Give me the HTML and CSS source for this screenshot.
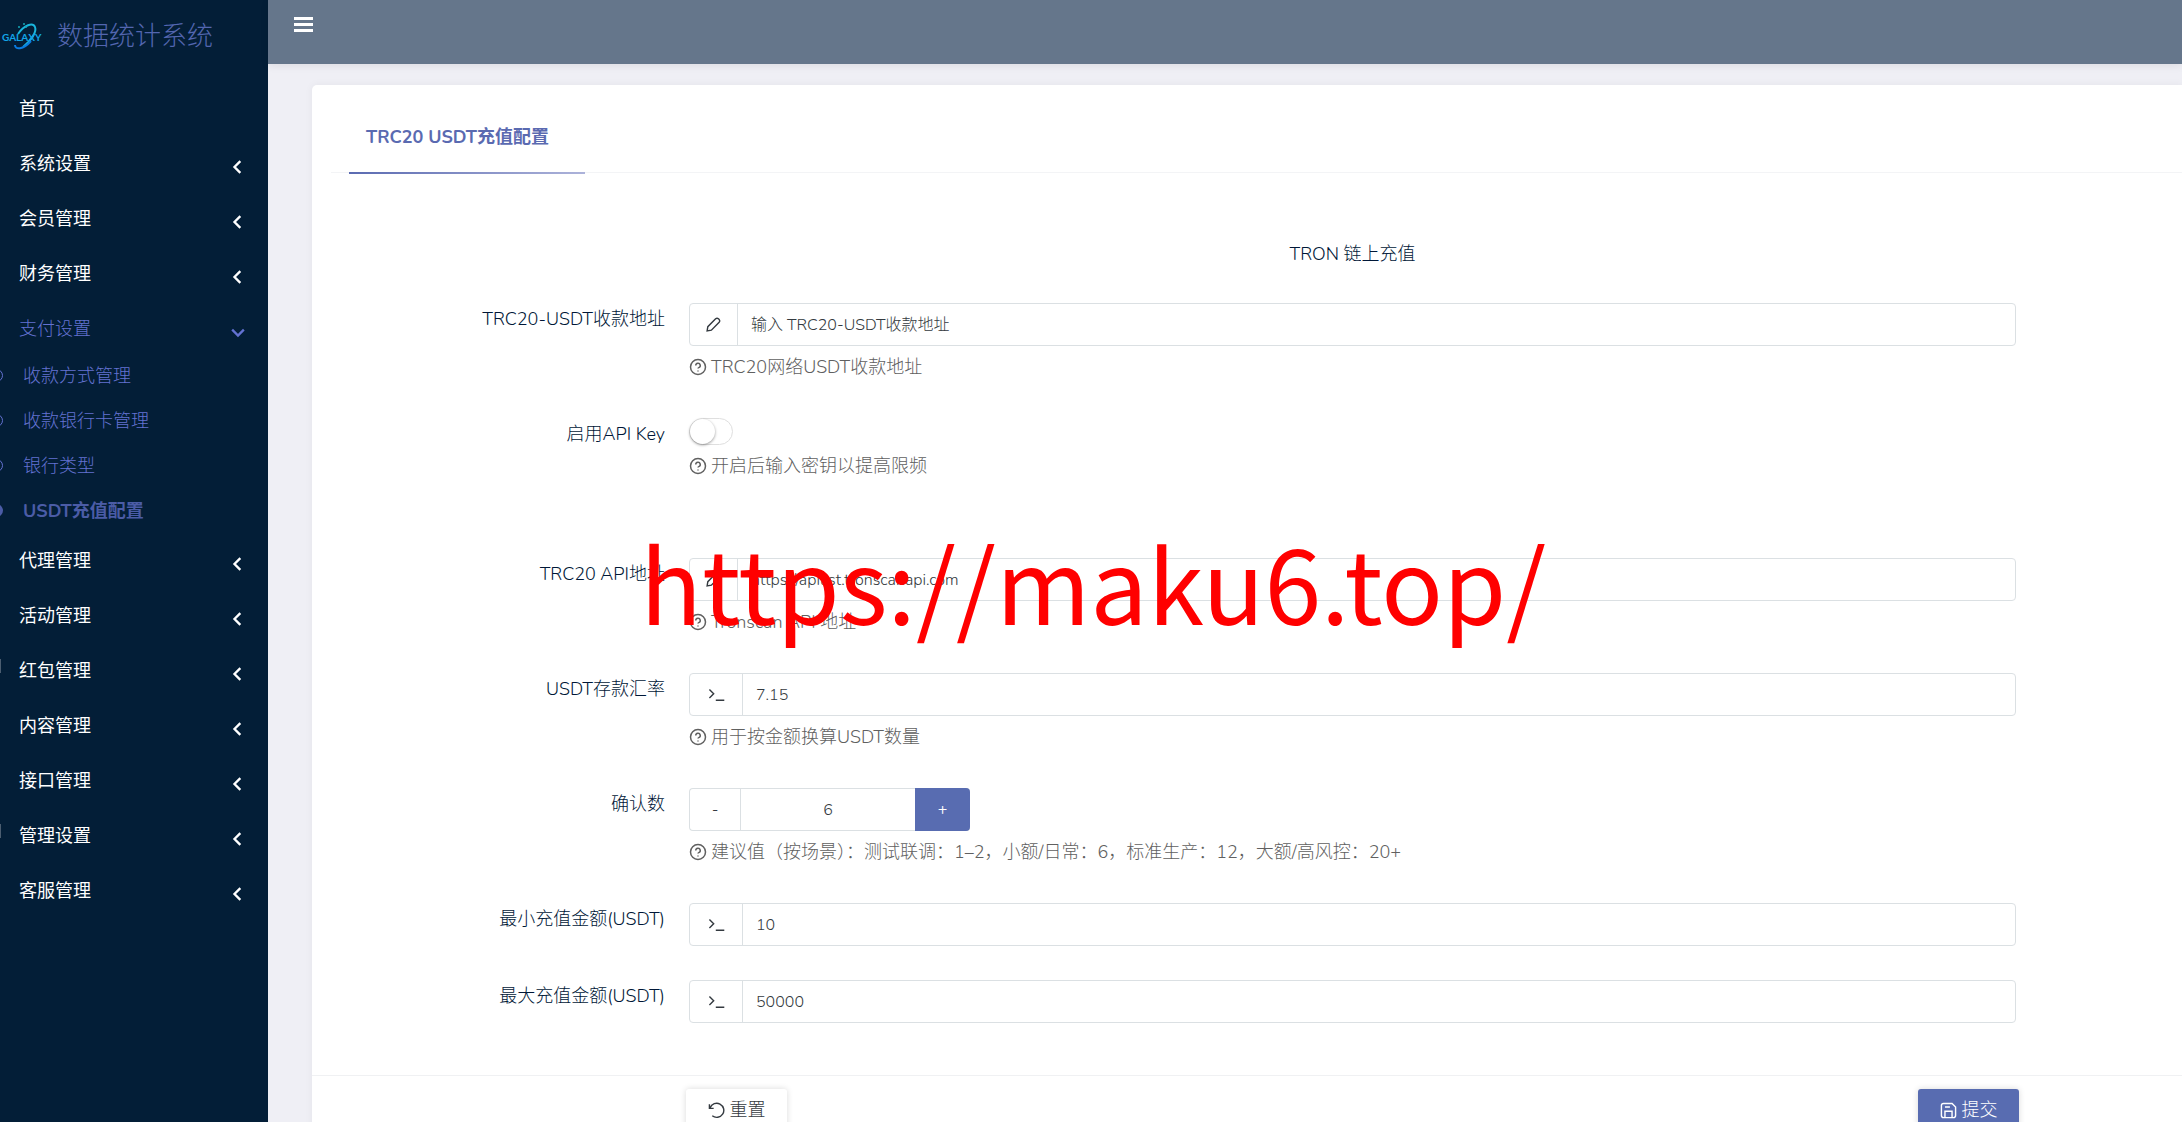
FILE: index.html
```html
<!DOCTYPE html>
<html lang="zh-CN">

<head>
    <meta charset="UTF-8">
    <meta name="viewport" content="width=device-width, initial-scale=1.0">
    <title>数据统计系统</title>
    <link rel="stylesheet" href="styles.css">
</head>

<body>
    <svg class="sprite" aria-hidden="true">
        <symbol id="i-left" viewBox="0 0 12 12"><path d="M8 1L3 6l5 5" /></symbol>
        <symbol id="i-down" viewBox="0 0 12 12"><path d="M1 4l5 5 5-5" /></symbol>
        <symbol id="i-help" viewBox="0 0 24 24"><circle cx="12" cy="12" r="10" /><path d="M9 10a3 3 0 1 1 4 2.800c-.7.300-1 .7-1 1.200M12 16.500v1.500" /></symbol>
        <symbol id="i-edit" viewBox="0 0 24 24"><path d="M3 21l1-6L15 4a3 3 0 0 1 4 0l1 1a3 3 0 0 1 0 4L9 20z" /></symbol>
        <symbol id="i-term" viewBox="0 0 24 24"><path d="M2 5l6 6-6 6M11 20h12" /></symbol>
        <symbol id="i-reset" viewBox="0 0 24 24"><path d="M2 3v6h6M3 8a10 10 0 1 1 3 11.500" /></symbol>
        <symbol id="i-save" viewBox="0 0 24 24"><path d="M5 2h12l5 5v12a3 3 0 0 1-3 3H5a3 3 0 0 1-3-3V5a3 3 0 0 1 3-3zM7 22v-9h10v9M7 7h7" /></symbol>
    </svg>

    <div class="layout">
        <aside class="sidebar">
            <a class="brand" href="#">
                <svg class="logo" viewBox="0 0 42 32" role="img" aria-label="GALAXY">
                    <path class="ring" d="M17 13C23 4 32 1 34 6c2 5-4 14-12 20" />
                    <path class="ring low" d="M14 24c0 5 8 5 16-4" />
                    <circle class="star" cx="23" cy="3" r="1" />
                    <circle class="star" cx="18" cy="6" r="1" />
                    <circle class="star" cx="25" cy="6" r="1" />
                    <text x="1" y="20">GALAXY</text>
                </svg>
                <span>数据统计系统</span>
            </a>
            <nav class="menu">
                <a href="#">首页</a>
                <a href="#">系统设置<svg><use href="#i-left" /></svg></a>
                <a href="#">会员管理<svg><use href="#i-left" /></svg></a>
                <a href="#">财务管理<svg><use href="#i-left" /></svg></a>
                <a class="open" href="#">支付设置<svg><use href="#i-down" /></svg></a>
                <div class="submenu">
                    <a href="#">收款方式管理</a>
                    <a href="#">收款银行卡管理</a>
                    <a href="#">银行类型</a>
                    <a class="active" href="#">USDT充值配置</a>
                </div>
                <a href="#">代理管理<svg><use href="#i-left" /></svg></a>
                <a href="#">活动管理<svg><use href="#i-left" /></svg></a>
                <a class="cut" href="#">红包管理<svg><use href="#i-left" /></svg></a>
                <a href="#">内容管理<svg><use href="#i-left" /></svg></a>
                <a href="#">接口管理<svg><use href="#i-left" /></svg></a>
                <a class="cut" href="#">管理设置<svg><use href="#i-left" /></svg></a>
                <a href="#">客服管理<svg><use href="#i-left" /></svg></a>
            </nav>
        </aside>

        <div class="page">
            <header class="topbar">
                <button class="toggle-menu" type="button" aria-label="菜单"><span></span><span></span><span></span></button>
            </header>

            <form class="card">
                <div class="tabs"><a class="tab" href="#">TRC20 USDT充值配置</a></div>

                <h4 class="title">TRON 链上充值</h4>

                <div class="row">
                    <label for="address">TRC20-USDT收款地址</label>
                    <div class="field">
                        <div class="group">
                            <span class="addon"><svg><use href="#i-edit" /></svg></span>
                            <input id="address" type="text" placeholder="输入 TRC20-USDT收款地址">
                        </div>
                        <p class="help"><svg><use href="#i-help" /></svg>TRC20网络USDT收款地址</p>
                    </div>
                </div>

                <div class="row switch-row">
                    <label for="apikey">启用API Key</label>
                    <div class="field">
                        <input class="switch" id="apikey" type="checkbox">
                        <p class="help"><svg><use href="#i-help" /></svg>开启后输入密钥以提高限频</p>
                    </div>
                </div>

                <div class="row">
                    <label for="api">TRC20 API地址</label>
                    <div class="field">
                        <div class="group">
                            <span class="addon"><svg><use href="#i-edit" /></svg></span>
                            <input id="api" type="text" value="https://apilist.tronscanapi.com">
                        </div>
                        <p class="help"><svg><use href="#i-help" /></svg>Tronscan API 地址</p>
                    </div>
                </div>

                <div class="row">
                    <label for="rate">USDT存款汇率</label>
                    <div class="field">
                        <div class="group">
                            <span class="addon wide"><svg><use href="#i-term" /></svg></span>
                            <input id="rate" type="text" value="7.15">
                        </div>
                        <p class="help"><svg><use href="#i-help" /></svg>用于按金额换算USDT数量</p>
                    </div>
                </div>

                <div class="row">
                    <label for="confirms">确认数</label>
                    <div class="field">
                        <div class="group stepper">
                            <button class="minus" type="button">-</button>
                            <input id="confirms" type="text" value="6">
                            <button class="plus" type="button">+</button>
                        </div>
                        <p class="help"><svg><use href="#i-help" /></svg>建议值（按场景）：测试联调：1–2，小额/日常：6，标准生产：12，大额/高风控：20+</p>
                    </div>
                </div>

                <div class="row">
                    <label for="min">最小充值金额(USDT)</label>
                    <div class="field">
                        <div class="group">
                            <span class="addon wide"><svg><use href="#i-term" /></svg></span>
                            <input id="min" type="text" value="10">
                        </div>
                    </div>
                </div>

                <div class="row">
                    <label for="max">最大充值金额(USDT)</label>
                    <div class="field">
                        <div class="group">
                            <span class="addon wide"><svg><use href="#i-term" /></svg></span>
                            <input id="max" type="text" value="50000">
                        </div>
                    </div>
                </div>

                <div class="actions">
                    <button class="btn" type="reset"><svg><use href="#i-reset" /></svg>重置</button>
                    <button class="btn primary" type="submit"><svg><use href="#i-save" /></svg>提交</button>
                </div>
            </form>
        </div>
    </div>

    <div class="watermark">https://maku6.top/</div>
</body>

</html>
```

FILE: styles.css
```css
*, *::before {
    box-sizing: border-box;
}

body {
    margin: 0;
    background-color: #efeff5;
    color: #001737;
    font-family: "Nunito", "Noto Sans", "Noto Sans CJK SC", sans-serif;
    font-size: 18px;
    font-weight: 300;
    line-height: 28px;
}

a {
    color: inherit;
    text-decoration: none;
}

svg {
    fill: none;
    stroke: currentColor;
    stroke-width: 2;
}

input, button {
    font: inherit;
    color: inherit;
}

.sprite {
    display: none;
}

.layout {
    display: flex;
    height: 100vh;
    overflow: hidden;
}

/* sidebar */
.sidebar {
    width: 268px;
    flex: none;
    background-color: #031e37;
    color: #fff;
}

.brand {
    display: flex;
    align-items: center;
    gap: 14px;
    height: 81px;
    padding: 0 0 8px 1px;
    color: #5366b0;
    font-size: 26px;
}

.logo {
    width: 42px;
    height: 32px;
}

.logo .ring {
    stroke: #19b5dd;
    stroke-width: 2;
}

.logo .low {
    stroke: #0a7be0;
}

.logo .star {
    fill: #14a9b8;
    stroke: none;
}

.logo text {
    fill: #12a5e8;
    stroke: none;
    font-family: "Lato", sans-serif;
    font-size: 10px;
    font-weight: 700;
}

.menu > a {
    display: flex;
    align-items: center;
    justify-content: space-between;
    height: 55px;
    padding: 0 23px 0 19px;
    font-weight: 400;
}

.menu svg {
    width: 14px;
    height: 14px;
    margin-top: 6px;
}

.menu > .open {
    color: #6472d2;
    font-weight: 300;
}

.menu .cut {
    border-left: 1px solid #4b5d70;
    border-image: linear-gradient(transparent 30%, #4b5d70 30%, #4b5d70 54%, transparent 54%) 1;
    padding-left: 18px;
}

.submenu {
    margin-top: -3px;
}

.submenu a {
    display: flex;
    align-items: center;
    gap: 20px;
    height: 45px;
    color: #6472d2;
}

.submenu a::before {
    content: "";
    width: 13px;
    height: 13px;
    margin-left: -10px;
    border: 1px solid #6472d2;
    border-radius: 50%;
}

.submenu .active {
    color: #4b5ca6;
    font-weight: 700;
}

.submenu .active::before {
    border: 3px solid #4b5ca6;
}

/* content */
.page {
    flex: 1;
    min-width: 0;
}

.topbar {
    height: 64px;
    padding: 17px 26px;
    background-color: #65768b;
    box-shadow: 0 2px 8px rgba(0, 0, 0, 0.08);
}

.toggle-menu {
    display: flex;
    flex-direction: column;
    gap: 3px;
    padding: 0;
    border: none;
    background: none;
    cursor: pointer;
}

.toggle-menu span {
    width: 19px;
    height: 3px;
    background-color: #fff;
}

.card {
    margin: 21px 0 0 44px;
    height: 1200px;
    background-color: #fff;
    border-radius: 5px 0 0 5px;
    box-shadow: 0 0 8px rgba(0, 0, 0, 0.05);
}

.tabs {
    display: flex;
    height: 88px;
    margin-left: 19px;
    padding-left: 18px;
    border-bottom: 1px solid #f3f4f6;
}

.tab {
    height: 89px;
    padding: 38px 36px 0 17px;
    color: #5a6ab1;
    font-weight: 700;
    border-bottom: 2px solid #5a6ab1;
    border-image: linear-gradient(90deg, #5a6ab1, #adb3da) 1;
}

.title {
    margin: 67px 166px 35px 377px;
    font-size: 18px;
    font-weight: 300;
    text-align: center;
}

.row {
    display: flex;
    gap: 24px;
    padding-right: 166px;
    margin-bottom: 34px;
}

.row label {
    width: 353px;
    flex: none;
    padding-top: 2px;
    text-align: right;
}

.switch-row {
    margin-bottom: 75px;
}

.field {
    flex: 1;
    min-width: 0;
}

.group {
    display: flex;
    height: 43px;
    border: 1px solid #dbe0e3;
    border-radius: 4px;
    font-size: 16px;
    color: #343a40;
}

.group input {
    flex: 1;
    min-width: 0;
    padding: 0 13px;
    border: none;
    background: none;
    outline: none;
}

.group input::placeholder {
    color: #343a40;
    opacity: 1;
}

.addon {
    display: flex;
    align-items: center;
    justify-content: center;
    width: 48px;
    border-right: 1px solid #dbe0e3;
}

.addon.wide {
    width: 53px;
}

.addon svg {
    width: 17px;
    height: 17px;
}

.help {
    display: flex;
    align-items: center;
    gap: 4px;
    margin: 7px 0 3px;
    color: #606060;
}

.help svg {
    width: 18px;
    height: 18px;
}

.switch {
    display: block;
    appearance: none;
    width: 44px;
    height: 27px;
    margin: 0;
    border: 1px solid #dfdfdf;
    border-radius: 14px;
    background-color: #fff;
}

.switch::before {
    content: "";
    display: block;
    width: 25px;
    height: 25px;
    border-radius: 50%;
    background-color: #fff;
    box-shadow: 0 1px 3px rgba(0, 0, 0, 0.4);
}

.stepper {
    width: 281px;
    border-right: none;
}

.stepper input {
    text-align: center;
}

.stepper button {
    width: 51px;
    padding: 0;
    border: none;
    border-right: 1px solid #dbe0e3;
    background: none;
}

.stepper .plus {
    width: 55px;
    margin: -1px 0;
    border: none;
    border-radius: 0 4px 4px 0;
    background-color: #586cb1;
    color: #fff;
    font-weight: 400;
}

.actions {
    display: flex;
    justify-content: space-between;
    margin-top: 52px;
    padding: 13px 163px 0 374px;
    border-top: 1px solid #f0f1f3;
}

.btn {
    display: flex;
    align-items: center;
    justify-content: center;
    gap: 5px;
    width: 101px;
    height: 42px;
    border: none;
    border-radius: 3px;
    background-color: #fff;
    color: #343a40;
    box-shadow: 0 0 6px rgba(0, 0, 0, 0.15);
}

.btn svg {
    width: 17px;
    height: 17px;
}

.btn.primary {
    background-color: #586cb1;
    color: #fff;
}

.watermark {
    position: absolute;
    left: 640px;
    top: 501px;
    color: #f00;
    font-family: "Noto Sans CJK SC", sans-serif;
    font-size: 102px;
    font-weight: 400;
    line-height: 160px;
}
```
